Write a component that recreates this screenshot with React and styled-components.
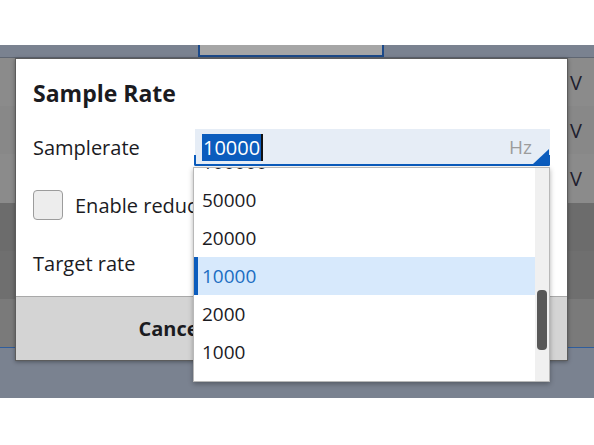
import { useLayoutEffect, useRef, useState } from "react";
import styled, { createGlobalStyle } from "styled-components";

const GlobalStyle = createGlobalStyle`
  html, body {
    margin: 0;
    padding: 0;
    background: #ffffff;
  }

  body {
    font-family: "Open Sans", "Noto Sans", sans-serif;
    color: #1b1b1f;
  }
`;

const Page = styled.div`
  width: 594px;
  height: 445px;
  padding-top: 45px;
  box-sizing: border-box;
`;

const Workspace = styled.div`
  position: relative;
  height: 353px;
  display: grid;
  grid-template-rows: 13px 290px 1fr;
  background: #7a8290;
`;

const Toolbar = styled.div`
  display: flex;
  align-items: flex-start;
  padding-left: 198px;
  box-shadow: inset 0 -1px 0 #5f6672;
`;

const ToolButton = styled.div`
  width: 186px;
  height: 12px;
  box-sizing: border-box;
  background: #a6a6a6;
  border: 2px solid #1c4a8a;
  border-top: none;
`;

const Table = styled.div`
  display: grid;
  grid-template-rows: repeat(6, 1fr);
  border-bottom: 1px solid #2f5d9c;
`;

const Row = styled.div`
  display: flex;
  align-items: center;
  justify-content: flex-end;
  padding-right: 12px;
  background: ${(p) => p.$tone};
  font-size: 20px;
  color: #1e1e2e;
`;

const Dialog = styled.div`
  position: absolute;
  left: 15px;
  top: 13px;
  width: 553px;
  height: 303px;
  box-sizing: border-box;
  display: flex;
  flex-direction: column;
  background: #ffffff;
  border: 1px solid #5c5c5c;
  box-shadow: 0 1px 4px rgba(0, 0, 0, 0.35);
`;

const Body = styled.div`
  flex: 1;
  padding: 19px 17px 0 17px;
`;

const Title = styled.h2`
  margin: 0 0 20px;
  font-size: 23px;
  line-height: 30px;
  font-weight: 700;
`;

const Form = styled.div`
  display: grid;
  grid-template-columns: 162px 1fr;
  grid-auto-rows: 38px;
  row-gap: 20px;
  align-items: center;
`;

const Label = styled.span`
  font-size: 20px;
`;

const CheckRow = styled.label`
  grid-column: 1 / -1;
  display: flex;
  align-items: center;
  gap: 12px;
  font-size: 20px;
`;

const CheckBox = styled.span`
  width: 30px;
  height: 30px;
  box-sizing: border-box;
  border: 1.5px solid #9c9c9c;
  border-radius: 4px;
  background: #ededed;
`;

const Combo = styled.div`
  position: relative;
  height: 37px;
  display: flex;
  align-items: center;
  padding-left: 7px;
  background: #e6edf6;

  &::after {
    content: "";
    position: absolute;
    left: -1px;
    right: 0;
    bottom: 0;
    height: 9px;
    border: 2px solid #0b5cbd;
    border-top: none;
    border-radius: 0 0 2px 2px;
  }
`;

const Selected = styled.span`
  font-size: 20px;
  line-height: 27px;
  padding: 0 1px;
  background: #0b5cbd;
  color: #ffffff;
`;

const Caret = styled.span`
  width: 2px;
  height: 27px;
  background: #111111;
`;

const Unit = styled.span`
  margin-left: auto;
  margin-right: 18px;
  font-size: 19px;
  color: #9c9c9c;
`;

const Corner = styled.svg`
  position: absolute;
  right: 1px;
  bottom: 2px;
`;

const Field = styled.div`
  height: 37px;
  background: #e6edf6;
  border-bottom: 2px solid #8a8a8a;
`;

const Dropdown = styled.div`
  position: absolute;
  z-index: 5;
  top: calc(100% + 1px);
  left: -2px;
  right: 0;
  height: 215px;
  box-sizing: border-box;
  display: flex;
  background: #ffffff;
  border: 1px solid #b8b8b8;
  box-shadow: 0 2px 5px rgba(0, 0, 0, 0.3);
`;

const List = styled.ul`
  flex: 1;
  list-style: none;
  margin: 0;
  padding: 0;
  overflow: hidden;
`;

const Track = styled.div`
  width: 14px;
  padding: 0 2px;
  box-sizing: border-box;
  background: #f0f0f0;
`;

const Thumb = styled.div`
  border-radius: 4px;
  background: #585858;
`;

const Option = styled.li`
  height: 38px;
  line-height: 38px;
  padding-left: 8px;
  font-size: 19px;
  color: ${(p) => (p.$active ? "#1b6ec2" : "#1b1b1f")};
  background: ${(p) => (p.$active ? "#d7e9fc" : "transparent")};
  box-shadow: ${(p) => (p.$active ? "inset 4px 0 0 #0b5cbd" : "none")};
`;

const Footer = styled.div`
  height: 63px;
  display: grid;
  grid-template-columns: 311px 1fr;
  background: #d4d4d4;
  border-top: 1px solid #a9a9a9;
`;

const FooterButton = styled.button`
  border: 0;
  background: transparent;
  font-family: inherit;
  font-size: 20px;
  font-weight: 700;
  color: #1b1b1f;
`;

const rowTones = ["#8b8b8b", "#888888", "#8b8b8b", "#6c6c6c", "#6f6f6f", "#7a7a7a"];

const rates = [
  "200000000", "100000000", "50000000", "20000000", "10000000", "5000000",
  "2000000", "1000000", "500000", "250000", "200000", "100000",
  "50000", "20000", "10000", "2000", "1000", "500", "200", "100",
];

const SCROLL = 443;

export default function App() {
  const listRef = useRef(null);
  const [thumb, setThumb] = useState({ top: 122, height: 59 });

  useLayoutEffect(() => {
    const el = listRef.current;
    if (!el) return;
    el.scrollTop = SCROLL;
    const view = el.clientHeight;
    const total = el.scrollHeight;
    const height = Math.round((view * view) / total);
    const top = Math.round((el.scrollTop / (total - view)) * (view - height)) - 2;
    setThumb({ top, height });
  }, []);

  return (
    <>
      <GlobalStyle />
      <Page>
        <Workspace>
          <Toolbar>
            <ToolButton />
          </Toolbar>
          <Table>
            {rowTones.map((tone, i) => (
              <Row key={i} $tone={tone}>
                {i < 3 ? "V" : ""}
              </Row>
            ))}
          </Table>
          <div />

          <Dialog>
            <Body>
              <Title>Sample Rate</Title>
              <Form>
                <Label>Samplerate</Label>
                <Combo>
                  <Selected>10000</Selected>
                  <Caret />
                  <Unit>Hz</Unit>
                  <Corner width="16" height="15" viewBox="0 0 16 15">
                    <path d="M16 0 L16 15 L0 15 Z" fill="#0b5cbd" />
                  </Corner>
                  <Dropdown>
                    <List ref={listRef}>
                      {rates.map((r) => (
                        <Option key={r} $active={r === "10000"}>
                          {r}
                        </Option>
                      ))}
                    </List>
                    <Track>
                      <Thumb style={{ marginTop: thumb.top, height: thumb.height }} />
                    </Track>
                  </Dropdown>
                </Combo>

                <CheckRow>
                  <CheckBox />
                  Enable reduction
                </CheckRow>

                <Label>Target rate</Label>
                <Field />
              </Form>
            </Body>
            <Footer>
              <FooterButton>Cancel</FooterButton>
              <FooterButton>OK</FooterButton>
            </Footer>
          </Dialog>
        </Workspace>
      </Page>
    </>
  );
}
